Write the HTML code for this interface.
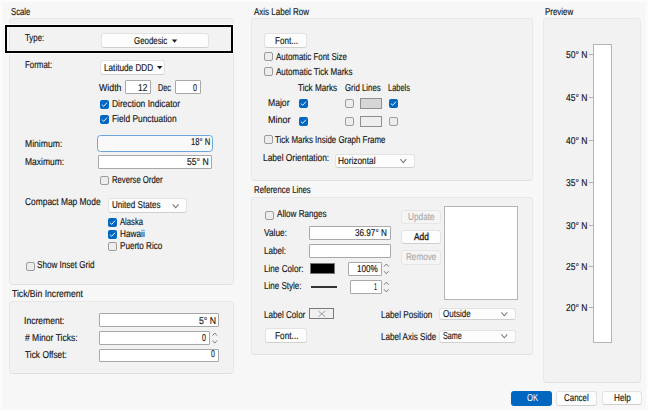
<!DOCTYPE html>
<html><head><meta charset="utf-8"><style>
html,body{margin:0;padding:0}
body{text-rendering:geometricPrecision;width:648px;height:411px;overflow:hidden;position:relative;background:#fcfcfc;font-family:"Liberation Sans",sans-serif}
body>div,body>svg{position:absolute;box-sizing:border-box}
.t{-webkit-text-stroke:0.15px currentColor;font-size:10px;line-height:12px;white-space:nowrap;transform-origin:0 0}
</style></head><body>
<div style="left:2px;top:2px;width:644px;height:407px;background:#f7f7f7"></div>
<div style="left:9px;top:18px;width:225px;height:267px;background:#f2f2f2;border:1px solid #e8e8e8;border-bottom-color:#e0e0e0;border-radius:4px"></div>
<div style="left:9px;top:301px;width:225px;height:73px;background:#f2f2f2;border:1px solid #e8e8e8;border-bottom-color:#e0e0e0;border-radius:4px"></div>
<div style="left:251px;top:18px;width:282px;height:163px;background:#f2f2f2;border:1px solid #e8e8e8;border-bottom-color:#e0e0e0;border-radius:4px"></div>
<div style="left:251px;top:197px;width:282px;height:158px;background:#f2f2f2;border:1px solid #e8e8e8;border-bottom-color:#e0e0e0;border-radius:4px"></div>
<div style="left:543px;top:18px;width:98px;height:365px;background:#f2f2f2;border:1px solid #e8e8e8;border-bottom-color:#e0e0e0;border-radius:4px"></div>
<div style="left:5px;top:25px;width:228px;height:28px;border:2px solid #000;box-shadow:0 0 0 1px #fff"></div>
<div style="left:101px;top:33px;width:108px;height:15px;background:#fdfdfd;border:1px solid #e2e2e2;border-bottom-color:#cfcfcf;border-radius:3px"></div>
<div style="left:100px;top:60px;width:65px;height:15px;background:#fdfdfd;border:1px solid #e2e2e2;border-bottom-color:#cfcfcf;border-radius:3px"></div>
<div style="left:125px;top:80px;width:26px;height:14px;background:#fff;border:1px solid #a8a8a8;border-radius:1px"></div>
<div style="left:175px;top:80px;width:26px;height:14px;background:#fff;border:1px solid #a8a8a8;border-radius:1px"></div>
<div style="left:100px;top:100px;width:9px;height:9px;background:#0067c0;border-radius:2px"><svg width="9" height="9" style="position:absolute;left:0;top:0"><path d="M1.8 4.6 L3.7 6.3 L7 2.7" fill="none" stroke="#f4f8fc" stroke-width="0.95"/></svg></div>
<div style="left:100px;top:115px;width:9px;height:9px;background:#0067c0;border-radius:2px"><svg width="9" height="9" style="position:absolute;left:0;top:0"><path d="M1.8 4.6 L3.7 6.3 L7 2.7" fill="none" stroke="#f4f8fc" stroke-width="0.95"/></svg></div>
<div style="left:97px;top:135px;width:116px;height:17px;background:#f9f9f9;border:1.6px solid #6aa5dc;border-radius:3.5px"></div>
<div style="left:98px;top:155px;width:114px;height:14px;background:#fff;border:1px solid #a8a8a8;border-radius:1px"></div>
<div style="left:100px;top:176px;width:9px;height:9px;background:#ededed;border:1px solid #9c9c9c;border-radius:2px"></div>
<div style="left:108px;top:198px;width:79px;height:15px;background:#fdfdfd;border:1px solid #e2e2e2;border-bottom-color:#cfcfcf;border-radius:3px"></div>
<div style="left:108px;top:218px;width:9px;height:9px;background:#0067c0;border-radius:2px"><svg width="9" height="9" style="position:absolute;left:0;top:0"><path d="M1.8 4.6 L3.7 6.3 L7 2.7" fill="none" stroke="#f4f8fc" stroke-width="0.95"/></svg></div>
<div style="left:108px;top:230px;width:9px;height:9px;background:#0067c0;border-radius:2px"><svg width="9" height="9" style="position:absolute;left:0;top:0"><path d="M1.8 4.6 L3.7 6.3 L7 2.7" fill="none" stroke="#f4f8fc" stroke-width="0.95"/></svg></div>
<div style="left:108px;top:242px;width:9px;height:9px;background:#ededed;border:1px solid #9c9c9c;border-radius:2px"></div>
<div style="left:26px;top:262px;width:9px;height:9px;background:#ededed;border:1px solid #9c9c9c;border-radius:2px"></div>
<div style="left:99px;top:313px;width:120px;height:14px;background:#fff;border:1px solid #a8a8a8;border-radius:1px"></div>
<div style="left:99px;top:331px;width:111px;height:14px;background:#fff;border:1px solid #a8a8a8;border-radius:1px"></div>
<div style="left:99px;top:349px;width:120px;height:13px;background:#fff;border:1px solid #a8a8a8;border-radius:1px"></div>
<div style="left:264px;top:33px;width:43px;height:15px;background:#fdfdfd;border:1px solid #e2e2e2;border-bottom-color:#cfcfcf;border-radius:3px"></div>
<div style="left:264px;top:52px;width:9px;height:9px;background:#ededed;border:1px solid #9c9c9c;border-radius:2px"></div>
<div style="left:264px;top:67px;width:9px;height:9px;background:#ededed;border:1px solid #9c9c9c;border-radius:2px"></div>
<div style="left:299px;top:99px;width:9px;height:9px;background:#0067c0;border-radius:2px"><svg width="9" height="9" style="position:absolute;left:0;top:0"><path d="M1.8 4.6 L3.7 6.3 L7 2.7" fill="none" stroke="#f4f8fc" stroke-width="0.95"/></svg></div>
<div style="left:299px;top:117px;width:9px;height:9px;background:#0067c0;border-radius:2px"><svg width="9" height="9" style="position:absolute;left:0;top:0"><path d="M1.8 4.6 L3.7 6.3 L7 2.7" fill="none" stroke="#f4f8fc" stroke-width="0.95"/></svg></div>
<div style="left:345px;top:99px;width:9px;height:9px;background:#ededed;border:1px solid #9c9c9c;border-radius:2px"></div>
<div style="left:345px;top:117px;width:9px;height:9px;background:#ededed;border:1px solid #9c9c9c;border-radius:2px"></div>
<div style="left:360px;top:98px;width:22px;height:11px;background:#d6d6d6;border:1px solid #8f8f8f"></div>
<div style="left:360px;top:116px;width:22px;height:11px;background:#eeeeee;border:1px solid #8f8f8f"></div>
<div style="left:389px;top:99px;width:9px;height:9px;background:#0067c0;border-radius:2px"><svg width="9" height="9" style="position:absolute;left:0;top:0"><path d="M1.8 4.6 L3.7 6.3 L7 2.7" fill="none" stroke="#f4f8fc" stroke-width="0.95"/></svg></div>
<div style="left:389px;top:117px;width:9px;height:9px;background:#ededed;border:1px solid #9c9c9c;border-radius:2px"></div>
<div style="left:264px;top:135px;width:9px;height:9px;background:#ededed;border:1px solid #9c9c9c;border-radius:2px"></div>
<div style="left:335px;top:154px;width:80px;height:14px;background:#fdfdfd;border:1px solid #e2e2e2;border-bottom-color:#cfcfcf;border-radius:3px"></div>
<div style="left:265px;top:211px;width:9px;height:9px;background:#ededed;border:1px solid #9c9c9c;border-radius:2px"></div>
<div style="left:309px;top:226px;width:82px;height:14px;background:#fff;border:1px solid #a8a8a8;border-radius:1px"></div>
<div style="left:309px;top:244px;width:82px;height:14px;background:#fff;border:1px solid #a8a8a8;border-radius:1px"></div>
<div style="left:401px;top:210px;width:40px;height:14px;background:#f5f5f5;border:1px solid #e6e6e6;border-radius:3px"></div>
<div style="left:401px;top:230px;width:40px;height:14px;background:#fdfdfd;border:1px solid #e2e2e2;border-bottom-color:#cfcfcf;border-radius:3px"></div>
<div style="left:401px;top:250px;width:40px;height:15px;background:#f5f5f5;border:1px solid #e6e6e6;border-radius:3px"></div>
<div style="left:444px;top:206px;width:74px;height:94px;background:#fff;border:1px solid #b5b5b5"></div>
<div style="left:310px;top:263px;width:25px;height:11px;background:#000;border:1px solid #777"></div>
<div style="left:348px;top:262px;width:34px;height:14px;background:#fff;border:1px solid #a8a8a8;border-radius:1px"></div>
<div style="left:311px;top:286px;width:26px;height:2px;background:#333"></div>
<div style="left:350px;top:280px;width:32px;height:14px;background:#fff;border:1px solid #a8a8a8;border-radius:1px"></div>
<div style="left:309px;top:308px;width:25px;height:11px;background:#f0f0f0;border:1px solid #7a7a7a"></div>
<div style="left:265px;top:328px;width:42px;height:15px;background:#fdfdfd;border:1px solid #e2e2e2;border-bottom-color:#cfcfcf;border-radius:3px"></div>
<div style="left:439px;top:308px;width:77px;height:12px;background:#fdfdfd;border:1px solid #e2e2e2;border-bottom-color:#cfcfcf;border-radius:3px"></div>
<div style="left:439px;top:330px;width:77px;height:13px;background:#fdfdfd;border:1px solid #e2e2e2;border-bottom-color:#cfcfcf;border-radius:3px"></div>
<div style="left:593px;top:44px;width:19px;height:299px;background:#fff;border:1px solid #b4b4b4"></div>
<div style="left:589px;top:54px;width:4px;height:1px;background:#b0b0b0"></div>
<div style="left:589px;top:97px;width:4px;height:1px;background:#b0b0b0"></div>
<div style="left:589px;top:140px;width:4px;height:1px;background:#b0b0b0"></div>
<div style="left:589px;top:182px;width:4px;height:1px;background:#b0b0b0"></div>
<div style="left:589px;top:225px;width:4px;height:1px;background:#b0b0b0"></div>
<div style="left:589px;top:266px;width:4px;height:1px;background:#b0b0b0"></div>
<div style="left:589px;top:307px;width:4px;height:1px;background:#b0b0b0"></div>
<div style="left:511px;top:391px;width:41px;height:15px;background:#0067c0;border-radius:3px"></div>
<div style="left:556px;top:391px;width:41px;height:15px;background:#fdfdfd;border:1px solid #e2e2e2;border-bottom-color:#cfcfcf;border-radius:3px"></div>
<div style="left:602px;top:391px;width:40px;height:14px;background:#fdfdfd;border:1px solid #e2e2e2;border-bottom-color:#cfcfcf;border-radius:3px"></div>
<svg style="position:absolute;left:0;top:0" width="648" height="411"><path d="M171.8 39.6 L177.3 39.6 L174.55 42.800000000000004 Z" fill="#1e1e1e"/><path d="M157 66 L162.5 66 L159.75 69.2 Z" fill="#1e1e1e"/><path d="M172.7 204.3 L175.7 207.70000000000002 L178.7 204.3" fill="none" stroke="#7a7a7a" stroke-width="1.05"/><path d="M212.5 335.6 L214.8 333 L217.1 335.6" fill="none" stroke="#707070" stroke-width="0.9"/><path d="M212.5 340.5 L214.8 343.1 L217.1 340.5" fill="none" stroke="#707070" stroke-width="0.9"/><path d="M400.3 159.2 L403.3 162.6 L406.3 159.2" fill="none" stroke="#7a7a7a" stroke-width="1.05"/><path d="M384 266.6 L386.3 264 L388.6 266.6" fill="none" stroke="#707070" stroke-width="0.9"/><path d="M384 271.2 L386.3 273.8 L388.6 271.2" fill="none" stroke="#707070" stroke-width="0.9"/><path d="M384 284.8 L386.3 282.2 L388.6 284.8" fill="none" stroke="#707070" stroke-width="0.9"/><path d="M384 289.3 L386.3 291.90000000000003 L388.6 289.3" fill="none" stroke="#707070" stroke-width="0.9"/><path d="M318.3 311 L325.2 316.8 M325.2 311 L318.3 316.8" stroke="#8a8a8a" stroke-width="0.8"/><path d="M501.3 312.4 L504.3 315.79999999999995 L507.3 312.4" fill="none" stroke="#7a7a7a" stroke-width="1.05"/><path d="M501.3 334.4 L504.3 337.79999999999995 L507.3 334.4" fill="none" stroke="#7a7a7a" stroke-width="1.05"/></svg>
<div class="t" style="left:11.40px;top:7.00px;color:#141414;transform:scaleX(0.7720);">Scale</div>
<div class="t" style="left:253.50px;top:7.00px;color:#141414;transform:scaleX(0.7986);">Axis Label Row</div>
<div class="t" style="left:544.80px;top:7.00px;color:#141414;transform:scaleX(0.7917);">Preview</div>
<div class="t" style="left:11.50px;top:289.00px;color:#141414;transform:scaleX(0.8602);">Tick/Bin Increment</div>
<div class="t" style="left:253.80px;top:185.00px;color:#141414;transform:scaleX(0.7795);">Reference Lines</div>
<div class="t" style="left:25.00px;top:33.00px;color:#141414;transform:scaleX(0.7833);">Type:</div>
<div class="t" style="left:134.30px;top:36.00px;color:#141414;transform:scaleX(0.7881);">Geodesic</div>
<div class="t" style="left:25.00px;top:60.00px;color:#141414;transform:scaleX(0.7882);">Format:</div>
<div class="t" style="left:103.60px;top:63.00px;color:#141414;transform:scaleX(0.8183);">Latitude DDD</div>
<div class="t" style="left:98.60px;top:83.00px;color:#141414;transform:scaleX(0.8800);">Width</div>
<div class="t" style="left:138.00px;top:83.00px;color:#141414;transform:scaleX(0.8364);">12</div>
<div class="t" style="left:158.40px;top:83.00px;color:#141414;transform:scaleX(0.7333);">Dec</div>
<div class="t" style="left:193.20px;top:83.00px;color:#141414;transform:scaleX(0.7167);">0</div>
<div class="t" style="left:111.90px;top:99.00px;color:#141414;transform:scaleX(0.8444);">Direction Indicator</div>
<div class="t" style="left:111.90px;top:114.00px;color:#141414;transform:scaleX(0.8364);">Field Punctuation</div>
<div class="t" style="left:25.00px;top:139.00px;color:#141414;transform:scaleX(0.8605);">Minimum:</div>
<div class="t" style="left:190.90px;top:137.00px;color:#141414;transform:scaleX(0.7680);">18° N</div>
<div class="t" style="left:25.00px;top:157.00px;color:#141414;transform:scaleX(0.8478);">Maximum:</div>
<div class="t" style="left:186.50px;top:157.00px;color:#141414;transform:scaleX(0.8640);">55° N</div>
<div class="t" style="left:112.00px;top:175.00px;color:#141414;transform:scaleX(0.7712);">Reverse Order</div>
<div class="t" style="left:25.00px;top:197.00px;color:#141414;transform:scaleX(0.8400);">Compact Map Mode</div>
<div class="t" style="left:111.60px;top:200.00px;color:#141414;transform:scaleX(0.8067);">United States</div>
<div class="t" style="left:119.60px;top:217.00px;color:#141414;transform:scaleX(0.7667);">Alaska</div>
<div class="t" style="left:119.60px;top:229.00px;color:#141414;transform:scaleX(0.8233);">Hawaii</div>
<div class="t" style="left:119.60px;top:241.00px;color:#141414;transform:scaleX(0.8096);">Puerto Rico</div>
<div class="t" style="left:37.40px;top:260.00px;color:#141414;transform:scaleX(0.8085);">Show Inset Grid</div>
<div class="t" style="left:23.64px;top:316.00px;color:#141414;transform:scaleX(0.8565);">Increment:</div>
<div class="t" style="left:199.00px;top:316.00px;color:#141414;transform:scaleX(0.8737);">5° N</div>
<div class="t" style="left:24.50px;top:333.00px;color:#141414;transform:scaleX(0.8525);"># Minor Ticks:</div>
<div class="t" style="left:201.90px;top:333.00px;color:#141414;transform:scaleX(0.7167);">0</div>
<div class="t" style="left:24.50px;top:350.00px;color:#141414;transform:scaleX(0.8380);">Tick Offset:</div>
<div class="t" style="left:211.00px;top:349.00px;color:#141414;transform:scaleX(0.7000);">0</div>
<div class="t" style="left:274.60px;top:36.00px;color:#141414;transform:scaleX(0.8071);">Font...</div>
<div class="t" style="left:275.90px;top:52.00px;color:#141414;transform:scaleX(0.7922);">Automatic Font Size</div>
<div class="t" style="left:275.90px;top:67.00px;color:#141414;transform:scaleX(0.8042);">Automatic Tick Marks</div>
<div class="t" style="left:298.00px;top:83.00px;color:#141414;transform:scaleX(0.8167);">Tick Marks</div>
<div class="t" style="left:344.60px;top:83.00px;color:#141414;transform:scaleX(0.7848);">Grid Lines</div>
<div class="t" style="left:388.30px;top:83.00px;color:#141414;transform:scaleX(0.7433);">Labels</div>
<div class="t" style="left:268.40px;top:98.00px;color:#141414;transform:scaleX(0.8600);">Major</div>
<div class="t" style="left:268.40px;top:115.00px;color:#141414;transform:scaleX(0.9000);">Minor</div>
<div class="t" style="left:275.40px;top:135.00px;color:#141414;transform:scaleX(0.7907);">Tick Marks Inside Graph Frame</div>
<div class="t" style="left:263.20px;top:153.00px;color:#141414;transform:scaleX(0.8380);">Label Orientation:</div>
<div class="t" style="left:338.10px;top:156.00px;color:#141414;transform:scaleX(0.8333);">Horizontal</div>
<div class="t" style="left:276.80px;top:209.00px;color:#141414;transform:scaleX(0.8115);">Allow Ranges</div>
<div class="t" style="left:263.60px;top:228.00px;color:#141414;transform:scaleX(0.8333);">Value:</div>
<div class="t" style="left:355.00px;top:228.00px;color:#141414;transform:scaleX(0.8154);">36.97° N</div>
<div class="t" style="left:263.60px;top:246.00px;color:#141414;transform:scaleX(0.8074);">Label:</div>
<div class="t" style="left:407.80px;top:212.00px;color:#aaaaaa;transform:scaleX(0.8250);">Update</div>
<div class="t" style="left:413.60px;top:232.00px;color:#141414;transform:scaleX(0.8333);-webkit-text-stroke:0.3px currentColor;">Add</div>
<div class="t" style="left:405.60px;top:252.00px;color:#aaaaaa;transform:scaleX(0.8135);">Remove</div>
<div class="t" style="left:264.00px;top:264.00px;color:#141414;transform:scaleX(0.8146);">Line Color:</div>
<div class="t" style="left:356.60px;top:264.00px;color:#141414;transform:scaleX(0.8154);">100%</div>
<div class="t" style="left:264.00px;top:281.00px;color:#141414;transform:scaleX(0.8043);">Line Style:</div>
<div class="t" style="left:374.00px;top:282.00px;color:#141414;transform:scaleX(0.5333);">1</div>
<div class="t" style="left:263.50px;top:310.00px;color:#141414;transform:scaleX(0.8078);">Label Color</div>
<div class="t" style="left:381.10px;top:310.00px;color:#141414;transform:scaleX(0.8159);">Label Position</div>
<div class="t" style="left:442.50px;top:309.00px;color:#141414;transform:scaleX(0.8029);">Outside</div>
<div class="t" style="left:275.00px;top:331.00px;color:#141414;transform:scaleX(0.8286);">Font...</div>
<div class="t" style="left:381.10px;top:332.00px;color:#141414;transform:scaleX(0.8074);">Label Axis Side</div>
<div class="t" style="left:442.50px;top:331.00px;color:#141414;transform:scaleX(0.7192);">Same</div>
<div class="t" style="left:565.80px;top:50.00px;color:#141414;transform:scaleX(0.8560);">50° N</div>
<div class="t" style="left:565.80px;top:93.00px;color:#141414;transform:scaleX(0.8560);">45° N</div>
<div class="t" style="left:565.80px;top:136.00px;color:#141414;transform:scaleX(0.8560);">40° N</div>
<div class="t" style="left:565.80px;top:178.00px;color:#141414;transform:scaleX(0.8560);">35° N</div>
<div class="t" style="left:565.80px;top:221.00px;color:#141414;transform:scaleX(0.8560);">30° N</div>
<div class="t" style="left:565.80px;top:262.00px;color:#141414;transform:scaleX(0.8560);">25° N</div>
<div class="t" style="left:565.80px;top:303.00px;color:#141414;transform:scaleX(0.8560);">20° N</div>
<div class="t" style="left:526.50px;top:393.00px;color:#ffffff;transform:scaleX(0.7786);-webkit-text-stroke:0;">OK</div>
<div class="t" style="left:564.40px;top:393.00px;color:#141414;transform:scaleX(0.7935);">Cancel</div>
<div class="t" style="left:614.00px;top:393.00px;color:#141414;transform:scaleX(0.8190);">Help</div>
</body></html>
